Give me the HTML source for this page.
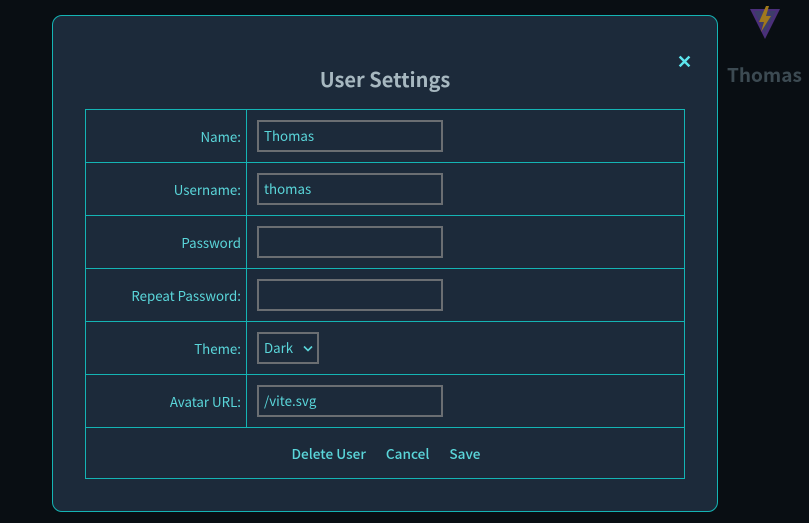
<!DOCTYPE html>
<html><head><style>
*{box-sizing:border-box;margin:0;padding:0}
body{width:809px;height:523px;background:#090e13;font-family:"Noto Sans CJK SC","Liberation Sans",sans-serif;position:relative;overflow:hidden}
.modal{position:absolute;left:52px;top:15px;width:666px;height:497px;background:#1c2a3a;border:1px solid #14b4b4;border-radius:10px}
.title{position:absolute;left:0;width:100%;top:48px;text-align:center;color:#a7b8c0;font-weight:bold;font-size:20px}
.x{position:absolute;left:624px;top:32px;color:#5de6ee;font-size:18px;font-weight:bold}
table{position:absolute;left:32px;top:93px;width:600px;border-collapse:collapse}
td{border:1px solid #14b4b4;height:53px;color:#5ad6da;font-size:13.3px}
td.l{width:161px;text-align:right;padding-right:5px}
td.r{padding-left:10px}
.in{width:186px;height:32px;border:2px solid #6a6e72;color:#5ad6da;font-size:13.3px;padding-left:5px;line-height:27px}
.sel{width:62px;height:32px;border:2px solid #6a6e72;color:#5ad6da;font-size:13.3px;padding-left:5px;line-height:27px;position:relative}
.btns{text-align:center;height:51px;font-size:13.6px;font-weight:500;padding-left:2px}
.btns span{margin:0 10px}
.name{position:absolute;left:727px;top:61px;color:#3c4a52;font-weight:bold;font-size:19px}
</style></head><body>
<svg style="position:absolute;left:748px;top:5px" width="34" height="36" viewBox="0 0 34 36">
<polygon points="2,4 32,4 17,34" fill="#4b2f7a"/>
<polygon points="6,6 28,6 17,28" fill="#3d3d6a"/>
<polygon points="18,1 11,17 16,17 13,27 23,11 18,11 21,1" fill="#a0781c"/>
</svg>
<div class="name">Thomas</div>
<div class="modal">
<div class="title">User Settings</div>
<div class="x">✕</div>
<table>
<tr><td class="l">Name:</td><td class="r"><div class="in">Thomas</div></td></tr>
<tr><td class="l">Username:</td><td class="r"><div class="in">thomas</div></td></tr>
<tr><td class="l">Password</td><td class="r"><div class="in"></div></td></tr>
<tr><td class="l">Repeat Password:</td><td class="r"><div class="in"></div></td></tr>
<tr><td class="l">Theme:</td><td class="r"><div class="sel">Dark<svg style="position:absolute;left:44px;top:11px" width="10" height="7" viewBox="0 0 10 7"><path d="M1 1.5 L5 5.5 L9 1.5" stroke="#5ad6da" stroke-width="1.6" fill="none"/></svg></div></td></tr>
<tr><td class="l">Avatar URL:</td><td class="r"><div class="in">/vite.svg</div></td></tr>
<tr><td colspan="2" class="btns"><span>Delete User</span><span>Cancel</span><span>Save</span></td></tr>
</table>
</div>
</body></html>
